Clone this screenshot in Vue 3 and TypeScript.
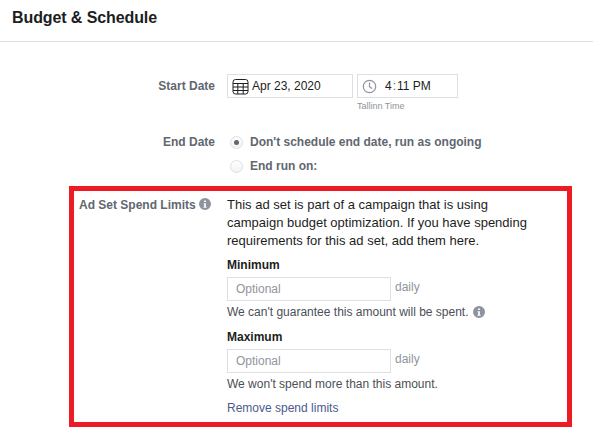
<script setup lang="ts">
const infoPath = 'M6 0a6 6 0 1 0 0 12A6 6 0 0 0 6 0zm-.9 2.4h1.8v1.7H5.1zm-.4 2.8h2.2v3.6h.7v1H4.5v-1h.7V6.2h-.5z'
</script>

<template>
  <div class="page">
    <header class="header">Budget &amp; Schedule</header>

    <div class="form">
      <div class="row start-row">
        <div class="label">Start Date</div>
        <div class="field">
          <div class="inputs">
            <div class="box date-box">
              <svg class="cal" width="17" height="17" viewBox="0 0 17 17" fill="none" stroke="#1c1e21" stroke-width="1">
                <rect x="1" y="1.5" width="15" height="14.5" rx="2.5" />
                <path d="M1 5.5h15M1 9h15M1 12.5h15M5.8 5.5V16M11.2 5.5V16" />
              </svg>
              <span>Apr 23, 2020</span>
            </div>
            <div class="box time-box">
              <svg class="clock" width="15" height="15" viewBox="0 0 15 15" fill="none" stroke="#90949c" stroke-width="1.2">
                <circle cx="7.5" cy="7.5" r="6.2" />
                <path d="M7.5 3.5v4.2l2.6 1.8" />
              </svg>
              <span class="time">4<i class="colon">:</i>11 PM</span>
            </div>
          </div>
          <div class="zone">Tallinn Time</div>
        </div>
      </div>

      <div class="row end-row">
        <div class="label">End Date</div>
        <div class="field options">
          <div class="option">
            <span class="radio checked"></span>
            <span>Don't schedule end date, run as ongoing</span>
          </div>
          <div class="option">
            <span class="radio"></span>
            <span>End run on:</span>
          </div>
        </div>
      </div>
    </div>

    <section class="limits">
      <div class="limits-label">
        <span>Ad Set Spend Limits</span>
        <svg class="info" width="12" height="12" viewBox="0 0 12 12"><path :d="infoPath" fill="#8d949e" fill-rule="evenodd" /></svg>
      </div>
      <div class="limits-body">
        <p class="intro">This ad set is part of a campaign that is using campaign budget optimization. If you have spending requirements for this ad set, add them here.</p>

        <div class="title first">Minimum</div>
        <div class="amount">
          <div class="box amount-box">Optional</div>
          <span class="daily">daily</span>
        </div>
        <div class="note">
          We can't guarantee this amount will be spent.
          <svg class="info note-info" width="12" height="12" viewBox="0 0 12 12"><path :d="infoPath" fill="#8d949e" fill-rule="evenodd" /></svg>
        </div>

        <div class="title second">Maximum</div>
        <div class="amount">
          <div class="box amount-box">Optional</div>
          <span class="daily">daily</span>
        </div>
        <div class="note">We won't spend more than this amount.</div>

        <a class="remove">Remove spend limits</a>
      </div>
    </section>
  </div>
</template>

<style>
html, body { margin: 0; background: #fff; overflow: hidden; }
</style>

<style scoped>
.page {
  width: 593px;
  height: 432px;
  overflow: hidden;
  background: #fff;
  font-family: "Liberation Sans", Arial, sans-serif;
  font-size: 12px;
  color: #1c1e21;
}
.header {
  box-sizing: border-box;
  height: 42px;
  padding: 9px 12px 0;
  border-bottom: 1px solid #dddfe2;
  font-size: 16px;
  font-weight: 700;
  line-height: 18px;
  letter-spacing: -0.1px;
}
.form { padding-top: 32px; }
.row { display: flex; }
.label {
  box-sizing: border-box;
  width: 215px;
  text-align: right;
  font-weight: 700;
  color: #606770;
  line-height: 24px;
}
.field { margin-left: 12px; }
.inputs { display: flex; gap: 4px; }
.box {
  box-sizing: border-box;
  height: 24px;
  display: flex;
  align-items: center;
  border: 1px solid #dddfe2;
  background: #fff;
}
.date-box { width: 126px; padding-left: 4px; }
.cal { margin-right: 3px; flex: none; }
.time-box { width: 101px; padding-left: 4px; }
.clock { flex: none; }
.time { margin-left: 8px; }
.colon { font-style: normal; padding: 0 1px; color: #606770; }
.zone {
  margin-top: 2px;
  font-size: 9px;
  line-height: 12px;
  color: #90949c;
  padding-left: 130px;
}
.end-row { margin-top: 18px; }
.options { display: flex; flex-direction: column; margin-left: 15px; }
.option {
  display: flex;
  align-items: center;
  height: 24px;
  font-weight: 700;
  color: #606770;
  gap: 7px;
}
.radio {
  box-sizing: border-box;
  width: 13px;
  height: 13px;
  border-radius: 50%;
  border: 1px solid #dddfe2;
  background: linear-gradient(#fff, #f1f2f4);
  display: flex;
  align-items: center;
  justify-content: center;
}
.radio.checked::after {
  content: "";
  width: 5px;
  height: 5px;
  border-radius: 50%;
  background: #606770;
}
.limits {
  box-sizing: border-box;
  display: flex;
  width: 503px;
  height: 241px;
  margin: 8px 0 0 69px;
  border: 5px solid #ed1c24;
  padding: 5px 0 0 5px;
}
.limits-label {
  width: 136px;
  flex: none;
  display: flex;
  align-items: flex-start;
  gap: 3px;
  font-weight: 700;
  color: #606770;
  line-height: 18px;
  white-space: nowrap;
}
.limits-label .info { margin-top: 2px; }
.limits-body { margin-left: 12px; min-width: 0; flex: 1; }
.intro {
  margin: 0;
  font-size: 13px;
  line-height: 18px;
  width: 310px;
}
.title { font-weight: 700; line-height: 16px; }
.title.first { margin-top: 7px; }
.title.second { margin-top: 9px; }
.amount {
  display: flex;
  align-items: flex-start;
  margin-top: 4px;
  gap: 4px;
}
.amount-box {
  width: 164px;
  padding-left: 8px;
  color: #90949c;
}
.daily {
  color: #90949c;
  line-height: 20px;
}
.note {
  margin-top: 3px;
  line-height: 16px;
  color: #4b4f56;
  display: flex;
  align-items: center;
  gap: 4px;
}
.remove {
  display: block;
  margin-top: 8px;
  line-height: 16px;
  color: #4b5a8f;
}
</style>
